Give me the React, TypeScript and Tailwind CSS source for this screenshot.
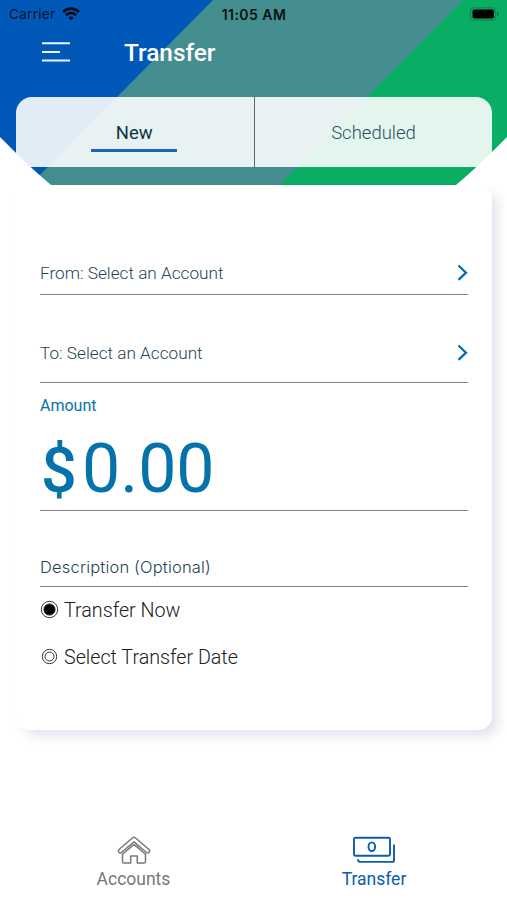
import React from "react";

function StatusBar() {
  return (
    <div className="grid h-7 grid-cols-3 items-center pl-[9px] pr-[8px] font-['Inter',sans-serif] text-[#06152b]">
      <div className="flex items-center gap-[7px]">
        <span className="text-[13.7px] tracking-[0.2px]">Carrier</span>
        <svg width="18" height="14" viewBox="0 0 18 14" fill="none" stroke="#020b18" strokeWidth="2.700">
          <path d="M1 4.900C5.500 .6 12.500 .6 17 4.900" />
          <path d="M3.900 8.200c3-2.700 7.200-2.700 10.200 0" />
          <path d="M9 13.300 6.300 10.600c1.500-1.400 3.900-1.400 5.400 0Z" fill="#020b18" stroke="none" />
        </svg>
      </div>
      <span className="text-center text-[14px] font-semibold tracking-[0.450px] text-[#06140f]">11:05 AM</span>
      <svg className="justify-self-end" width="30" height="14" viewBox="0 0 30 14">
        <rect x="1.500" y=".8" width="25" height="12.400" rx="3.500" fill="none" stroke="#078a50" strokeWidth="1.200" />
        <rect x="3.500" y="2.600" width="21.500" height="8.800" rx="2" fill="#000" />
        <path d="M28 4.800v4.400c2-.7 2-3.700 0-4.400Z" fill="#076f42" />
      </svg>
    </div>
  );
}

function HeaderArt() {
  return (
    <svg className="absolute inset-0" width="507" height="185" viewBox="0 0 507 185">
      <path d="M0 0H507V185H0Z" fill="#0aad64" />
      <path d="M0 0H463L279.500 185H0Z" fill="#448e8f" />
      <path d="M0 0H213L30 185H0Z" fill="#0059b8" />
    </svg>
  );
}

function Corners() {
  return (
    <svg className="absolute inset-0" width="507" height="186" viewBox="0 0 507 186" fill="#fff">
      <path d="M0 137 16 153Q31 168 51 185V186H0Z" />
      <path d="M507 137 491 153Q476 168 456 185V186H507Z" />
    </svg>
  );
}

function AccountRow({ label, className }: { label: string; className: string }) {
  return (
    <div className={`flex justify-between border-b-[1.500px] border-[#808080] ${className}`}>
      <span className="text-[17.200px] font-light leading-6 text-[#1d4555]">{label}</span>
      <svg className="mt-[3px]" width="11" height="18" viewBox="0 0 11 18" fill="none" stroke="#0870a8" strokeWidth="2.300">
        <path d="m1.500 1.500 7.500 7.200-7.500 7.200" />
      </svg>
    </div>
  );
}

function Radio({ label, on }: { label: string; on?: boolean }) {
  return (
    <div className="flex h-6 gap-[5px] text-[19.700px] font-light leading-[26px] text-[#202020]">
      <svg className="mt-[2px]" width="19" height="19" viewBox="0 0 19 19" fill="none" stroke="#333">
        <circle cx="9.500" cy="9.500" r={on ? 8.2 : 7.2} strokeWidth="1" />
        <circle cx="9.500" cy="9.500" r={on ? 5.6 : 4.5} strokeWidth="1" fill={on ? "#000" : "none"} />
      </svg>
      <span>{label}</span>
    </div>
  );
}

export default function App() {
  return (
    <div className="flex h-[900px] w-[507px] flex-col overflow-hidden bg-white font-['Roboto',sans-serif]">
      <header className="relative z-10 h-[185px] shrink-0">
        <HeaderArt />
        <div className="relative">
          <StatusBar />
          <div className="flex h-[69px] items-start pl-[42px]">
            <svg className="mt-[13px]" width="28" height="22" viewBox="0 0 28 22" stroke="#e8f5ff" strokeWidth="2.100">
              <path d="M0 2.300H28M0 11H18M0 19.500H28" />
            </svg>
            <h1 className="ml-[54px] mt-[9px] text-[24.400px] font-medium leading-8 text-white">Transfer</h1>
          </div>
          <div className="ml-[15.500px] flex h-[70px] w-[476.500px] overflow-hidden rounded-t-2xl bg-white/[0.885] text-[18.500px]">
            <div className="flex w-[239.500px] flex-col items-center border-r-[1.500px] border-[#5b6b6b] pr-[1px] pt-[24px]">
              <span className="leading-6 text-[#0c3544]">New</span>
              <span className="mt-[4px] h-[3px] w-[86px] bg-[#1a66ba]" />
            </div>
            <div className="flex-1 pt-[24px] text-center font-light leading-6 text-[#2c4f5c]">Scheduled</div>
          </div>
        </div>
        <Corners />
      </header>
      <main className="ml-[16px] h-[545px] w-[476px] shrink-0 rounded-[14px] bg-white px-6 shadow-[7px_7px_12px_-1px_#e3e3f0]">
        <AccountRow label="From: Select an Account" className="mt-[76px] h-[34px]" />
        <AccountRow label="To: Select an Account" className="mt-[46px] h-[42px]" />
        <div className="h-[128px] border-b-[1.500px] border-[#808080] pt-[11px] text-[#0672aa]">
          <div className="text-[16px] leading-6">Amount</div>
          <div className="mt-[13px] flex items-baseline text-[68px] leading-[76px]">
            <span className="w-[43px] pl-[1px] text-[63px] font-medium leading-[76px]">$</span>
            <span className="-ml-px">0.00</span>
          </div>
        </div>
        <div className="h-[76px] border-b-[1.500px] border-[#808080] pt-[43.500px] font-['Inter',sans-serif] text-[16.500px] font-light leading-6 tracking-[0.180px] text-[#1d4555]">
          Description (Optional)
        </div>
        <div className="mt-[11px] flex flex-col gap-[23px]">
          <Radio label="Transfer Now" on />
          <Radio label="Select Transfer Date" />
        </div>
      </main>
      <nav className="mt-[105px] flex pl-[13px] text-[17.500px] leading-6">
        <div className="flex w-[241px] flex-col items-center text-[#777]">
          <svg width="34" height="32" viewBox="0 0 34 32" fill="none" stroke="#777" strokeWidth="1.500" strokeLinejoin="round">
            <path d="M15.400 3Q17 1.700 18.600 3L32 14.500Q33.300 16 32 17.300 30.800 18.700 29.200 17.300L17 6.900 4.800 17.300Q3.200 18.700 2 17.300.7 16 2 14.500Z" />
            <path d="M15.800 10.400Q17 9.400 18.200 10.400L28.500 19.200V26.600Q28.500 28 27 28H20.300V21H13.700V28H7Q5.500 28 5.500 26.600V19.200Z" />
          </svg>
          <span>Accounts</span>
        </div>
        <div className="flex w-[240px] flex-col items-center text-[#0b5cb3]">
          <svg width="42" height="32" viewBox="0 0 42 32" fill="none" stroke="#0b5cb3" strokeWidth="1.900">
            <rect x="1" y="2.800" width="36" height="18" rx="1.500" />
            <ellipse cx="18.800" cy="11.800" rx="3.300" ry="4.400" />
            <path d="M5 24.300Q5 26.900 7 26.900H39.500Q41 26.900 41 25.200V9.500" />
          </svg>
          <span>Transfer</span>
        </div>
      </nav>
    </div>
  );
}
